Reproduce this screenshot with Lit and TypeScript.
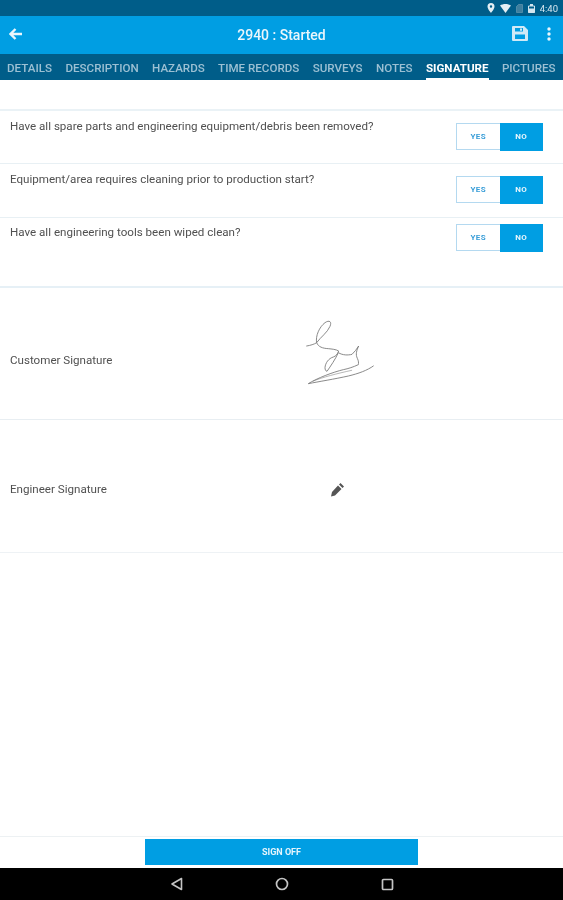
import { LitElement, css, html, svg } from "lit";
import { customElement } from "lit/decorators.js";

const TABS = ["DETAILS", "DESCRIPTION", "HAZARDS", "TIME RECORDS", "SURVEYS", "NOTES", "SIGNATURE", "PICTURES"];

const QUESTIONS = [
  { text: "Have all spare parts and engineering equipment/debris been removed?", cls: "q1" },
  { text: "Equipment/area requires cleaning prior to production start?", cls: "q2" },
  { text: "Have all engineering tools been wiped clean?", cls: "q3" },
];

// traced from the reference, viewBox is 3x the drawn size
const signature = svg`
  <svg width="120" height="100" viewBox="0 0 360 300" fill="none" stroke="#777" stroke-width="2.6" stroke-linecap="round" stroke-linejoin="round">
    <path d="M80 135 C92 133 102 130 110 125 C106 105 118 78 135 65 C148 56 156 62 150 76 C142 95 122 108 110 125 C115 138 128 142 145 143 C155 144 168 145 176 150 C172 160 168 165 160 168 C146 172 136 186 135 200 C135 206 137 210 141 211 C152 195 166 175 175 155 C188 163 204 163 216 160 C224 153 230 144 236 135 C230 148 226 160 232 172 C236 180 236 186 235 191 C220 198 205 203 190 206 C160 213 110 232 85 248 C115 242 165 234 205 225 C235 218 262 208 280 195" />
    <path d="M100 240 C130 228 170 218 215 208" stroke-width="1.600" />
  </svg>
`;

@customElement("app-root")
export class AppRoot extends LitElement {
  static styles = css`
    :host {
      display: flex;
      flex-direction: column;
      width: 563px;
      height: 900px;
      background: #fff;
      font-family: Roboto, "Liberation Sans", sans-serif;
      overflow: hidden;
      filter: blur(0.35px);
    }
    .status {
      height: 16px;
      background: #005d89;
      display: flex;
      align-items: center;
      justify-content: flex-end;
      gap: 5px;
      padding-right: 5px;
      color: #d5e6ef;
      font-size: 9.5px;
      flex: none;
    }
    .status svg {
      display: block;
    }
    .toolbar {
      height: 38px;
      background: #009ee3;
      display: flex;
      align-items: center;
      position: relative;
      flex: none;
      padding: 0 12px 0 9px;
      box-sizing: border-box;
    }
    .title {
      position: absolute;
      left: 0;
      right: 0;
      text-align: center;
      color: #eaf6fc;
      font-size: 14px;
      font-weight: 500;
      top: 11px;
    }
    .toolbar .back {
      margin-top: -2px;
    }
    .actions {
      margin-left: auto;
      display: flex;
      align-items: center;
      gap: 19px;
      margin-top: -3px;
    }
    .tabs {
      height: 26px;
      background: #005d89;
      display: flex;
      gap: 13.4px;
      padding-left: 7px;
      flex: none;
      box-sizing: border-box;
      white-space: nowrap;
    }
    .tab {
      color: #9cc0d3;
      font-size: 11.6px;
      font-weight: 500;
      line-height: 28px;
      height: 26px;
      box-sizing: border-box;
    }
    .tab.active {
      color: #fff;
      font-weight: 700;
      border-bottom: 2px solid #fff;
    }
    .content {
      flex: 1;
      padding-top: 29px;
      display: flex;
      flex-direction: column;
    }
    .q {
      border-top: 1px solid #e8f0f4;
      display: flex;
      justify-content: space-between;
      padding: 0 20px 0 10px;
      color: #505050;
      font-size: 11.6px;
      box-sizing: border-box;
    }
    .q1 { height: 54px; padding-top: 8px; border-top: 2px solid #eaf2f6; }
    .q2 { height: 54px; padding-top: 8px; }
    .q3 { height: 69px; padding-top: 7px; }
    .toggle {
      display: flex;
      width: 87px;
      height: 27px;
      box-sizing: border-box;
      border: 1.5px solid #b4d9f0;
      border-right: none;
      font-size: 8px;
      font-weight: 700;
      letter-spacing: 0.4px;
      margin-top: 4px;
    }
    .q3 .toggle { margin-top: -1px; }
    .yes, .no {
      display: flex;
      align-items: center;
      justify-content: center;
    }
    .yes { width: 42.5px; color: #3a9ed8; }
    .no { flex: 1; background: #009ee3; color: #e6f5fc; margin: -1.5px 0; }
    .sig {
      height: 133px;
      border-top: 2px solid #e6f0f6;
      display: flex;
      align-items: center;
      padding-left: 10px;
      color: #505050;
      font-size: 11.6px;
      box-sizing: border-box;
    }
    .sig + .sig { border-top: 1px solid #e8eef2; }
    .sig-label { flex: none; }
    .customer { padding-top: 12px; }
    .customer .sig-label { width: 270px; }
    .customer svg { margin-top: -18px; }
    .engineer { border-bottom: 1px solid #eef2f5; height: 134px; padding-top: 6px; }
    .engineer .sig-label { width: 320px; }
    .footer {
      height: 32px;
      border-top: 1px solid #edf1f3;
      display: flex;
      padding: 2px 0 3px 145px;
      box-sizing: border-box;
      flex: none;
    }
    .signoff {
      width: 273px;
      height: 26px;
      background: #009ee3;
      color: #e6f5fc;
      font-size: 9px;
      font-weight: 700;
      display: flex;
      align-items: center;
      justify-content: center;
    }
    .nav {
      height: 32px;
      background: #000;
      display: flex;
      align-items: center;
      justify-content: center;
      gap: 92px;
      flex: none;
    }
    .nav svg { display: block; }
  `;

  render() {
    return html`
      <div class="status">
        <svg width="8" height="10" viewBox="0 0 8 10"><path fill="#e3eef4" fill-rule="evenodd" d="M4 0a3.500 3.500 0 0 1 3.500 3.500C7.500 6 4 10 4 10S.5 6 .5 3.500A3.500 3.500 0 0 1 4 0Zm0 2.300a1.200 1.200 0 1 0 0 2.400 1.200 1.200 0 0 0 0-2.400Z"/></svg>
        <svg width="11" height="9" viewBox="0 0 11 9"><path fill="#e3eef4" d="M0 1.500C3 -.5 8 -.5 11 1.500L5.500 9Z"/></svg>
        <svg width="7" height="9" viewBox="0 0 7 9"><path fill="#3e7f9f" stroke="#6f9db4" stroke-width=".6" d="M.5 2.500 2.500.5h4v8h-6Z"/></svg>
        <svg width="7" height="9" viewBox="0 0 7 9"><path fill="none" stroke="#d5e6ef" d="M.5 2h6v6.500h-6Z"/><path fill="#d5e6ef" d="M2 0h3v2H2ZM.5 4.500h6V9h-6Z"/></svg>
        <span>4:40</span>
      </div>
      <div class="toolbar">
        <svg class="back" width="13" height="12" viewBox="0 0 13 12"><path fill="none" stroke="#eaf6fc" stroke-width="2.400" d="M13 6H2M6.500 1 1.500 6l5 5"/></svg>
        <div class="title">2940 : Started</div>
        <div class="actions">
          <svg width="16" height="15" viewBox="0 0 16 15"><path fill="#cfeaf7" fill-rule="evenodd" d="M1 0h11l4 4v10a1 1 0 0 1-1 1H1a1 1 0 0 1-1-1V1a1 1 0 0 1 1-1Zm2 2v3.500h8V2Zm5 .5h2v2.200H8ZM3 8.500V13h10V8.500Z"/></svg>
          <svg width="4" height="14" viewBox="0 0 4 14"><g fill="#eaf6fc"><circle cx="2" cy="2" r="1.700"/><circle cx="2" cy="7" r="1.700"/><circle cx="2" cy="12" r="1.700"/></g></svg>
        </div>
      </div>
      <div class="tabs">
        ${TABS.map((t) => html`<div class="tab ${t === "SIGNATURE" ? "active" : ""}">${t}</div>`)}
      </div>
      <div class="content">
        ${QUESTIONS.map(
          (q) => html`
            <div class="q ${q.cls}">
              <span>${q.text}</span>
              <div class="toggle"><div class="yes">YES</div><div class="no">NO</div></div>
            </div>
          `,
        )}
        <div class="sig customer">
          <span class="sig-label">Customer Signature</span>
          ${signature}
        </div>
        <div class="sig engineer">
          <span class="sig-label">Engineer Signature</span>
          <svg width="15" height="15" viewBox="0 0 15 15"><path fill="#555" d="M10.500 1 14 4.500 12.500 6 9 2.500ZM8 3.500 11.500 7 5 13.500 1 14.500 2 10Z"/></svg>
        </div>
      </div>
      <div class="footer"><div class="signoff">SIGN OFF</div></div>
      <div class="nav">
        <svg width="13" height="14" viewBox="0 0 13 14"><path fill="none" stroke="#c4c4c4" stroke-width="1.600" stroke-linejoin="round" d="M11.500 1.500v11L2 7Z"/></svg>
        <svg width="14" height="14" viewBox="0 0 14 14"><circle cx="7" cy="7" r="5.500" fill="none" stroke="#c4c4c4" stroke-width="1.700"/></svg>
        <svg width="13" height="13" viewBox="0 0 13 13"><rect x="1.500" y="1.500" width="10" height="10" rx="1" fill="none" stroke="#c4c4c4" stroke-width="1.700"/></svg>
      </div>
    `;
  }
}
